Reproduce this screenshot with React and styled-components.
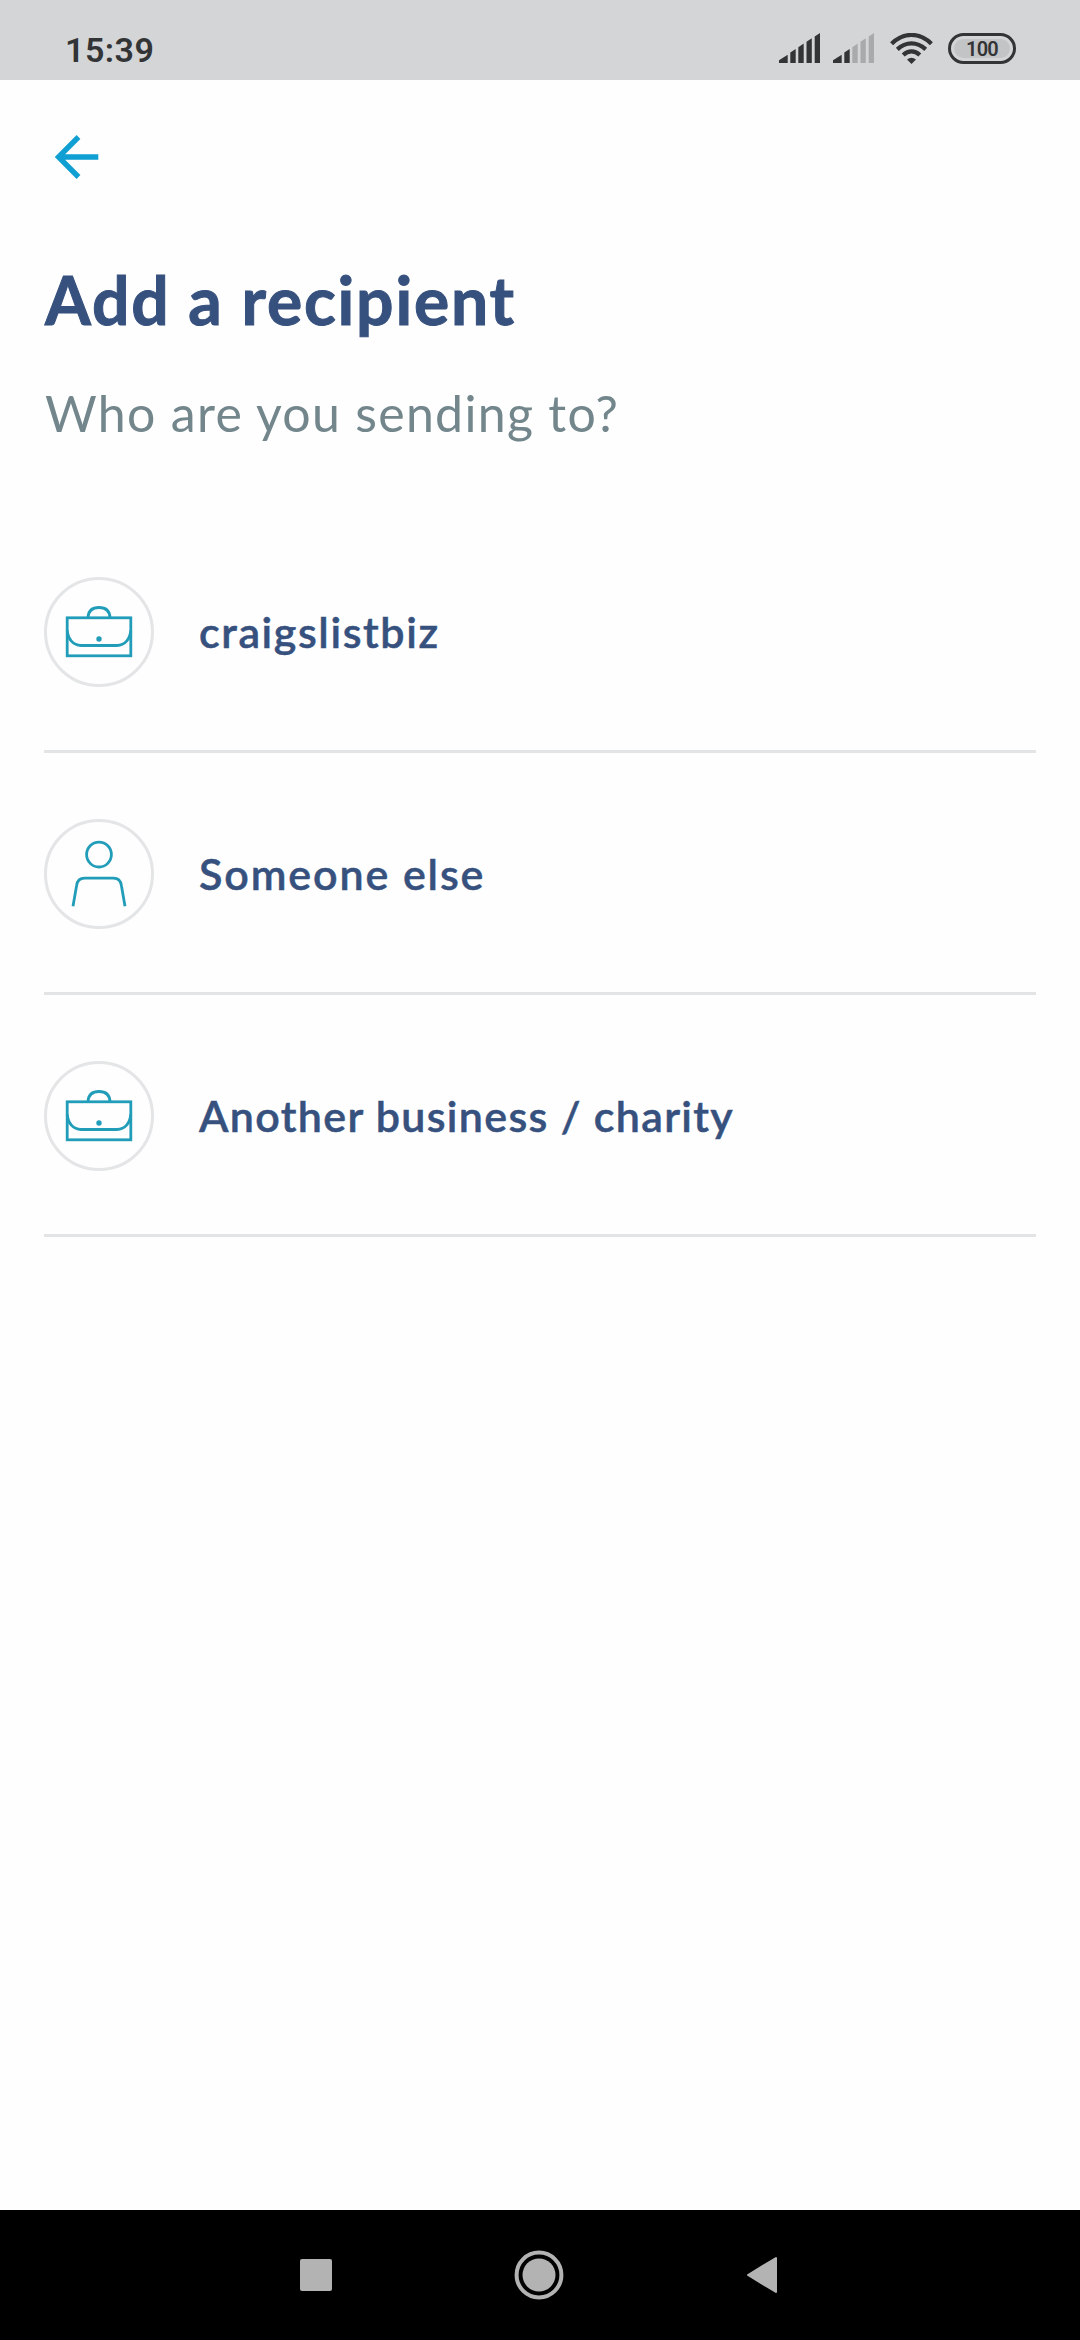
import React from 'react';
import styled, { createGlobalStyle } from 'styled-components';

const INK = '#333436';
const CYAN = '#229db9';

const recipients = [
  { id: 'own', label: 'craigslistbiz', icon: 'business', spacing: 1.6 },
  { id: 'person', label: 'Someone else', icon: 'person', spacing: 1.9 },
  {
    id: 'business',
    label: 'Another business / charity',
    icon: 'business',
    spacing: 1.33,
  },
];

const BriefcaseIcon = () => (
  <Icon width="74" height="74" viewBox="0 0 74 74" strokeWidth="2.8">
    <rect x="5.2" y="22.8" width="63.6" height="38" />
    <path d="M26 22.5C26.4 16 30.6 12.5 37 12.5S47.6 16 48 22.5" />
    <path d="M5.2 35.5C6 44 11 50.5 19 50.5H55C63 50.5 68 44 68.8 35.5" />
    <circle cx="37" cy="44" r="2.7" fill={CYAN} stroke="none" />
  </Icon>
);

const PersonIcon = () => (
  <Icon width="74" height="74" viewBox="0 0 74 74" strokeWidth="2.8">
    <circle cx="37" cy="17.6" r="12.4" />
    <path d="M11 69.2L14.6 48.5Q15.7 41.2 22.5 41.2H51.5Q58.3 41.2 59.4 48.5L63 69.2" />
  </Icon>
);

const icons = { business: BriefcaseIcon, person: PersonIcon };

const Signal = ({ level }) => {
  const bars = [
    'M0 30V27.2L8.7 21.8V30Z',
    'M11.3 30V19.6L16.7 16V30Z',
    'M19.3 30V14.2L24.7 10.6V30Z',
    'M27.5 30V8.8L32.8 5.2V30Z',
    'M35.7 30V3.4L41 0V30Z',
  ];

  return (
    <svg width="41" height="30" viewBox="0 0 41 30">
      {bars.map((d, i) => (
        <path key={d} d={d} fill={i < level ? INK : '#a9aaac'} />
      ))}
    </svg>
  );
};

const Wifi = () => (
  <svg width="43" height="31" viewBox="0 0 43 31" fill="none" stroke={INK}>
    <path d="M1.6 10.8C13.5-1 29.5-1 41.4 10.8" strokeWidth="4.3" />
    <path d="M7.3 16.3C16 8.3 27 8.3 35.7 16.3" strokeWidth="4.3" />
    <path d="M13.2 22C18.4 17.2 24.6 17.2 29.8 22" strokeWidth="4.3" />
    <path d="M17 26.5Q21.5 22.8 26 26.5L21.5 31Z" fill={INK} stroke="none" />
  </svg>
);

const App = () => (
  <Screen>
    <GlobalStyle />
    <StatusBar>
      <Time>15:39</Time>
      <StatusIcons>
        <Signal level={5} />
        <Signal level={2} />
        <Wifi />
        <Battery>
          <Charge>100</Charge>
        </Battery>
      </StatusIcons>
    </StatusBar>
    <Content>
      <BackButton aria-label="Back">
        <svg width="44" height="44" viewBox="0 0 44 44" fill="none">
          <path
            d="M23.5 2L3.5 22L23.5 42M3.5 22H43.3"
            stroke="#109fd2"
            strokeWidth="5.4"
          />
        </svg>
      </BackButton>
      <Title>Add a recipient</Title>
      <Subtitle>Who are you sending to?</Subtitle>
      <List>
        {recipients.map(item => {
          const ItemIcon = icons[item.icon];
          return (
            <Item key={item.id}>
              <Avatar>
                <ItemIcon />
              </Avatar>
              <Label spacing={item.spacing}>{item.label}</Label>
            </Item>
          );
        })}
      </List>
    </Content>
    <NavBar>
      <svg width="32" height="32" viewBox="0 0 32 32">
        <rect width="32" height="32" rx="2" fill="#b3b3b3" />
      </svg>
      <svg width="50" height="50" viewBox="0 0 50 50">
        <circle cx="25" cy="25" r="22.4" fill="none" stroke="#b3b3b3" strokeWidth="4" />
        <circle cx="25" cy="25" r="16.5" fill="#b3b3b3" />
      </svg>
      <svg width="32" height="38" viewBox="0 0 32 38">
        <path
          d="M2 19L30 2V36Z"
          fill="#b3b3b3"
          stroke="#b3b3b3"
          strokeWidth="2"
          strokeLinejoin="round"
        />
      </svg>
    </NavBar>
  </Screen>
);

const GlobalStyle = createGlobalStyle`
  * {
    box-sizing: border-box;
  }

  body {
    margin: 0;
    background: #fff;
  }

  svg {
    display: block;
    flex-shrink: 0;
  }
`;

const Screen = styled.div`
  display: flex;
  flex-direction: column;
  width: 1080px;
  height: 2340px;
  background: #fefefe;
  font-family: Lato, 'Open Sans', sans-serif;
`;

const StatusBar = styled.header`
  display: flex;
  justify-content: space-between;
  height: 80px;
  padding: 30px 64px 0 65px;
  background: #d4d5d7;
  color: ${INK};
  font-family: Roboto, sans-serif;
`;

const Time = styled.span`
  font-size: 34px;
  font-weight: 600;
  line-height: 40px;
  letter-spacing: 0.5px;
`;

const StatusIcons = styled.div`
  display: flex;
  align-items: flex-start;
  gap: 13px;
  padding-top: 3px;

  & > :nth-child(3) {
    margin-left: 3px;
  }

  & > :last-child {
    margin-left: 2px;
  }
`;

const Battery = styled.div`
  width: 68px;
  height: 31px;
  padding: 3px;
  border: 3px solid ${INK};
  border-radius: 16px;
`;

const Charge = styled.div`
  height: 19px;
  border-radius: 10px;
  background: #c3c4c6;
  font-size: 20px;
  font-weight: 600;
  line-height: 20px;
  letter-spacing: -0.8px;
  text-align: center;
`;

const Content = styled.main`
  flex: 1;
  padding: 55px 44px 0;
`;

const BackButton = styled.button`
  display: block;
  margin: 0 0 81px 11px;
  padding: 0;
  border: 0;
  background: none;
`;

const Title = styled.h1`
  margin: 0 0 43px 1px;
  font-size: 66px;
  font-weight: 700;
  line-height: 80px;
  letter-spacing: 1.8px;
  color: #37517e;
  -webkit-text-stroke: 1px #37517e;
`;

const Subtitle = styled.p`
  margin: 0 0 68px 1px;
  font-size: 50px;
  line-height: 60px;
  letter-spacing: 1.3px;
  color: #72868c;
`;

const List = styled.div`
  display: flex;
  flex-direction: column;
`;

const Item = styled.div`
  display: flex;
  align-items: center;
  height: 242px;
  padding-top: 3px;
  border-bottom: 3px solid #e3e4e5;
`;

const Avatar = styled.div`
  display: flex;
  align-items: center;
  justify-content: center;
  width: 110px;
  height: 110px;
  border: 3px solid #e4e5e6;
  border-radius: 50%;
`;

const Icon = styled.svg`
  fill: none;
  stroke: ${CYAN};
`;

const Label = styled.span.withConfig({
  shouldForwardProp: prop => prop !== 'spacing',
})`
  margin-left: 45px;
  padding-bottom: 1px;
  font-size: 43px;
  font-weight: 600;
  letter-spacing: ${props => props.spacing}px;
  color: #37517e;
  -webkit-text-stroke: 0.5px #37517e;
`;

const NavBar = styled.footer`
  display: flex;
  align-items: center;
  justify-content: space-between;
  height: 130px;
  padding: 0 302px 0 300px;
  background: #000;
`;

export default App;
